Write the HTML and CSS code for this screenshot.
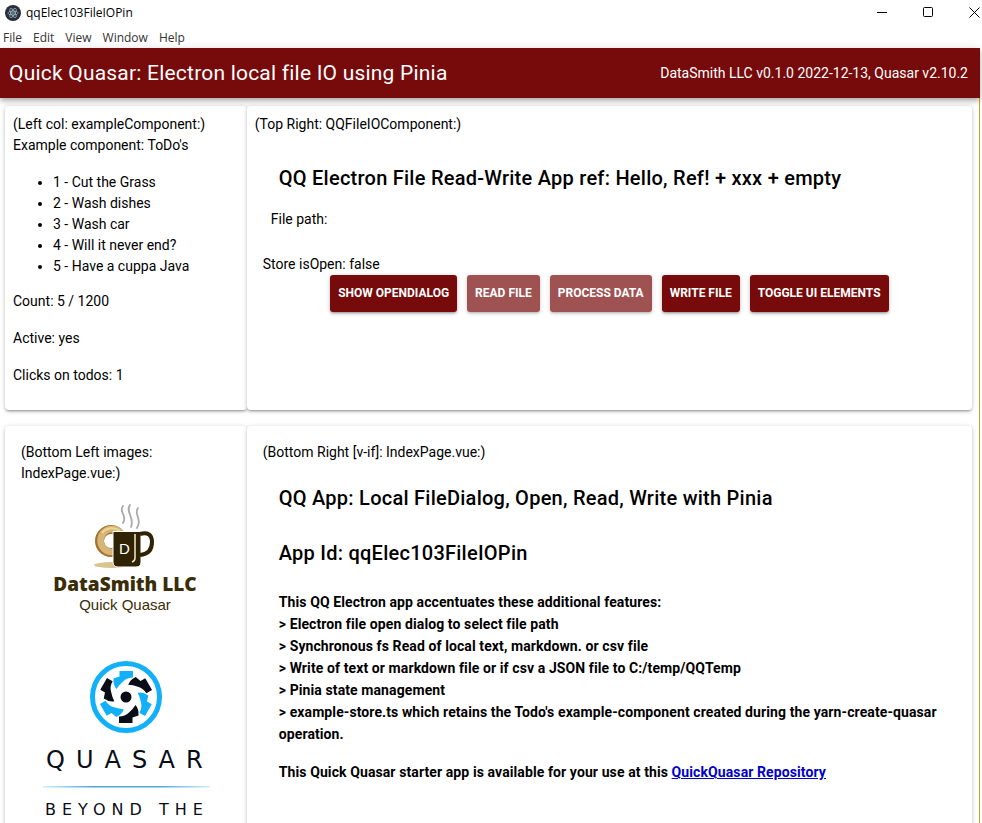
FILE: index.html
```html
<!DOCTYPE html>
<html lang="en">
<head>
<meta charset="utf-8">
<meta name="viewport" content="width=device-width, initial-scale=1">
<title>qqElec103FileIOPin</title>
<link rel="stylesheet" href="styles.css">
</head>
<body>
<div class="titlebar">
  <svg class="app-icon" viewBox="0 0 16 16" aria-hidden="true">
    <circle cx="8" cy="8" r="8" fill="#2b2e3a"/>
    <g fill="none" stroke="#9fc3cd" stroke-width=".7">
      <ellipse cx="8" cy="8" rx="5.2" ry="2"/>
      <ellipse cx="8" cy="8" rx="5.2" ry="2" transform="rotate(60 8 8)"/>
      <ellipse cx="8" cy="8" rx="5.2" ry="2" transform="rotate(120 8 8)"/>
    </g>
    <circle cx="8" cy="8" r=".8" fill="#9fc3cd"/>
  </svg>
  <span class="window-title">qqElec103FileIOPin</span>
  <div class="window-controls">
    <button type="button" aria-label="Minimize"><svg viewBox="0 0 11 11"><path d="M0 5.5h10"/></svg></button>
    <button type="button" aria-label="Maximize"><svg viewBox="0 0 11 11"><rect x=".5" y=".5" width="9" height="9" rx="1"/></svg></button>
    <button type="button" aria-label="Close"><svg viewBox="0 0 11 11"><path d="M.5.5l10 10M10.500.5l-10 10"/></svg></button>
  </div>
</div>
<nav class="menubar">
  <button type="button">File</button>
  <button type="button">Edit</button>
  <button type="button">View</button>
  <button type="button">Window</button>
  <button type="button">Help</button>
</nav>
<div class="app">
  <header class="toolbar">
    <div class="toolbar-title">Quick Quasar: Electron local file IO using Pinia</div>
    <div>DataSmith LLC v0.1.0 2022-12-13, Quasar v2.10.2</div>
  </header>
  <main class="page">
    <section class="card todos">
      <div>(Left col: exampleComponent:)</div>
      <p>Example component: ToDo's</p>
      <ul>
        <li>1 - Cut the Grass</li>
        <li>2 - Wash dishes</li>
        <li>3 - Wash car</li>
        <li>4 - Will it never end?</li>
        <li>5 - Have a cuppa Java</li>
      </ul>
      <p>Count: 5 / 1200</p>
      <p>Active: yes</p>
      <p>Clicks on todos: 1</p>
    </section>
    <section class="card file-io">
      <div>(Top Right: QQFileIOComponent:)</div>
      <div class="file-io-body">
        <h6>QQ Electron File Read-Write App ref: Hello, Ref! + xxx + empty</h6>
        <div class="file-path">File path:</div>
        <div>Store isOpen: false</div>
        <div class="actions">
          <button class="btn" type="button">Show OpenDialog</button>
          <button class="btn" type="button" disabled>Read File</button>
          <button class="btn" type="button" disabled>Process Data</button>
          <button class="btn" type="button">Write File</button>
          <button class="btn" type="button">Toggle UI Elements</button>
        </div>
      </div>
    </section>
    <section class="card images">
      <div>(Bottom Left images: IndexPage.vue:)</div>
      <div class="logos">
        <svg class="logo" viewBox="0 0 176 132" role="img" aria-label="DataSmith LLC Quick Quasar">
          <ellipse cx="75" cy="75" rx="18" ry="3" fill="#d9c48d"/>
          <circle cx="74" cy="51" r="11.500" fill="none" stroke="#a5712c" stroke-width="9"/>
          <circle cx="75" cy="50.500" r="11.500" fill="none" stroke="#d6b676" stroke-width="6.500"/>
          <path d="M65 43a13 13 0 0 1 18-2" fill="none" stroke="#ecd59c" stroke-width="2"/>
          <path d="M76 41.500H104V72q0 5-5 5H81q-5 0-5-5z" fill="#302304" stroke="#fff"/>
          <path d="M103 44q12-3 12 8 0 12-12 13" fill="none" stroke="#302304" stroke-width="4"/>
          <path d="M98 44v24q0 3-3 4" fill="none" stroke="#f3ead4" stroke-width="1.500"/>
          <text class="mug-letter" x="82" y="64">D</text>
          <g fill="none" stroke="#aaa9ad" stroke-width="1.800" stroke-linecap="round">
            <path d="M86 16c-5 6 5 9 0 17"/><path d="M93 15c-5 7 5 12 1 22"/><path d="M101 18c-5 6 5 11-1 20"/>
          </g>
          <text class="brand-name" x="88" y="101" text-anchor="middle">DataSmith LLC</text>
          <text class="brand-sub" x="88" y="120" text-anchor="middle">Quick Quasar</text>
        </svg>
        <svg class="logo" viewBox="0 0 176 190" role="img" aria-label="Quasar, beyond the framework">
          <defs>
            <path id="blade" d="M-6.500-26H7V-19.500Q1-19.500-3-15.500Q-7-12-9.500-8Q-13-12-12.500-18.500L-6.500-20.500Z"/>
            <linearGradient id="rule"><stop offset="0" stop-color="#d5ebf7"/><stop offset=".3" stop-color="#4ca9dc"/><stop offset=".7" stop-color="#4ca9dc"/><stop offset="1" stop-color="#d5ebf7"/></linearGradient>
          </defs>
          <circle cx="89" cy="40" r="33.500" fill="#fff" stroke="#12b0f8" stroke-width="5"/>
          <g transform="translate(89 40)">
            <g fill="#12b0f8">
              <use href="#blade"/><use href="#blade" transform="rotate(120)"/><use href="#blade" transform="rotate(240)"/>
            </g>
            <g fill="#090d17">
              <use href="#blade" transform="rotate(60)"/><use href="#blade" transform="rotate(180)"/><use href="#blade" transform="rotate(300)"/>
            </g>
            <circle r="5.500" fill="#090d17"/>
          </g>
          <text class="wordmark" x="9" y="111">QUASAR</text>
          <rect x="6" y="129" width="167" height="1.500" fill="url(#rule)"/>
          <text class="tagline" x="8" y="158">BEYOND THE</text>
        </svg>
      </div>
    </section>
    <section class="card about">
      <div>(Bottom Right [v-if]: IndexPage.vue:)</div>
      <div class="about-body">
        <h6>QQ App: Local FileDialog, Open, Read, Write with Pinia</h6>
        <h6>App Id: qqElec103FileIOPin</h6>
        <p>This QQ Electron app accentuates these additional features:<br>
        &gt; Electron file open dialog to select file path<br>
        &gt; Synchronous fs Read of local text, markdown. or csv file<br>
        &gt; Write of text or markdown file or if csv a JSON file to C:/temp/QQTemp<br>
        &gt; Pinia state management<br>
        &gt; example-store.ts which retains the Todo's example-component created during the yarn-create-quasar operation.</p>
        <p>This Quick Quasar starter app is available for your use at this <a href="#">QuickQuasar Repository</a></p>
      </div>
    </section>
  </main>
</div>
</body>
</html>
```
FILE: styles.css
```css
* { box-sizing: border-box; }

html, body { height: 100%; }

body {
  margin: 0;
  display: flex;
  flex-direction: column;
  overflow: hidden;
  background: #fff;
  color: #000;
  font: 14px/21px Roboto, sans-serif;
}

p { margin: 0 0 16px; }

button { font-family: inherit; }

.titlebar {
  display: flex;
  align-items: center;
  flex: none;
  height: 25px;
  padding-left: 5px;
  font: 12px/16px "Open Sans", sans-serif;
}

.app-icon { width: 16px; height: 16px; margin-right: 5px; }

.window-controls { display: flex; margin-left: auto; gap: 12px; }

.window-controls button {
  display: flex;
  justify-content: center;
  width: 34px;
  padding: 0;
  border: 0;
  background: none;
}

.window-controls button:last-child { margin-right: -9px; }

.window-controls svg {
  width: 11px;
  height: 11px;
  fill: none;
  stroke: #000;
}

.menubar {
  display: flex;
  flex: none;
  gap: 11px;
  height: 23px;
  padding-left: 3px;
}

.menubar button {
  padding: 2px 0 0;
  border: 0;
  background: none;
  color: #333;
  font: 12px/20px "Open Sans", sans-serif;
}

.app {
  flex: 1;
  display: flex;
  flex-direction: column;
  min-height: 0;
  margin-right: 2px;
  border-right: 1px solid #d0a020;
}

.toolbar {
  position: relative;
  z-index: 1;
  display: flex;
  align-items: center;
  justify-content: space-between;
  flex: none;
  height: 50px;
  margin-right: -1px;
  padding: 0 12px 0 9px;
  background: #770a0a;
  color: #fff;
  box-shadow: 0 2px 4px -1px rgba(0, 0, 0, .2), 0 4px 5px rgba(0, 0, 0, .14), 0 1px 10px rgba(0, 0, 0, .12);
}

.toolbar-title { font-size: 21px; letter-spacing: .01em; }

.page {
  flex: 1;
  display: grid;
  grid-template-columns: 1fr 3fr;
  grid-template-rows: 304px auto;
  row-gap: 16px;
  min-height: 0;
  padding: 8px 7px 0 5px;
}

.card {
  padding: 16px;
  border-radius: 4px;
  background: #fff;
  box-shadow: 0 1px 5px rgba(0, 0, 0, .2), 0 2px 2px rgba(0, 0, 0, .14), 0 3px 1px -2px rgba(0, 0, 0, .12);
}

.todos, .file-io { padding: 8px; }

ul { margin: 0 0 14px; padding-left: 40px; }

h6 {
  margin: 0;
  font-size: 20px;
  line-height: 32px;
  font-weight: 500;
  letter-spacing: .0125em;
}

.file-io-body { padding: 27px 8px 0; }

.file-io-body h6 { padding: 0 16px; }

.file-path { padding: 15px 8px 24px; }

.actions {
  display: flex;
  justify-content: center;
  gap: 10px;
}

.btn {
  height: 37px;
  padding: 0 8px 2px;
  border: 0;
  border-radius: 3px;
  background: #770a0a;
  color: #fff;
  font-size: 12px;
  line-height: 20px;
  font-weight: 700;
  text-transform: uppercase;
  box-shadow: 0 1px 5px rgba(0, 0, 0, .2), 0 2px 2px rgba(0, 0, 0, .14), 0 3px 1px -2px rgba(0, 0, 0, .12);
}

.btn:disabled { opacity: .7; }

.logos {
  display: flex;
  flex-direction: column;
  gap: 35px;
  padding: 6px 16px 0;
}

.logo { width: 176px; overflow: visible; }

.mug-letter { fill: #fff; font: 15px "Liberation Sans", sans-serif; }

.brand-name { fill: #3b2d08; font: 800 19px "Open Sans", sans-serif; }

.brand-sub { fill: #3b2d08; font: 15px "Liberation Sans", sans-serif; }

.wordmark { fill: #090d17; font: 24px "DejaVu Sans", sans-serif; letter-spacing: 11px; }

.tagline { fill: #090d17; font: 16px "DejaVu Sans", sans-serif; letter-spacing: 6px; }

.about-body { padding: 19px 16px 0; }

.about-body h6 { margin-bottom: 22px; }

.about-body h6:first-child { margin-bottom: 23px; }

.about-body p { font-weight: 700; line-height: 22px; letter-spacing: .00714em; }

.about-body a { color: #0000c8; }
```
